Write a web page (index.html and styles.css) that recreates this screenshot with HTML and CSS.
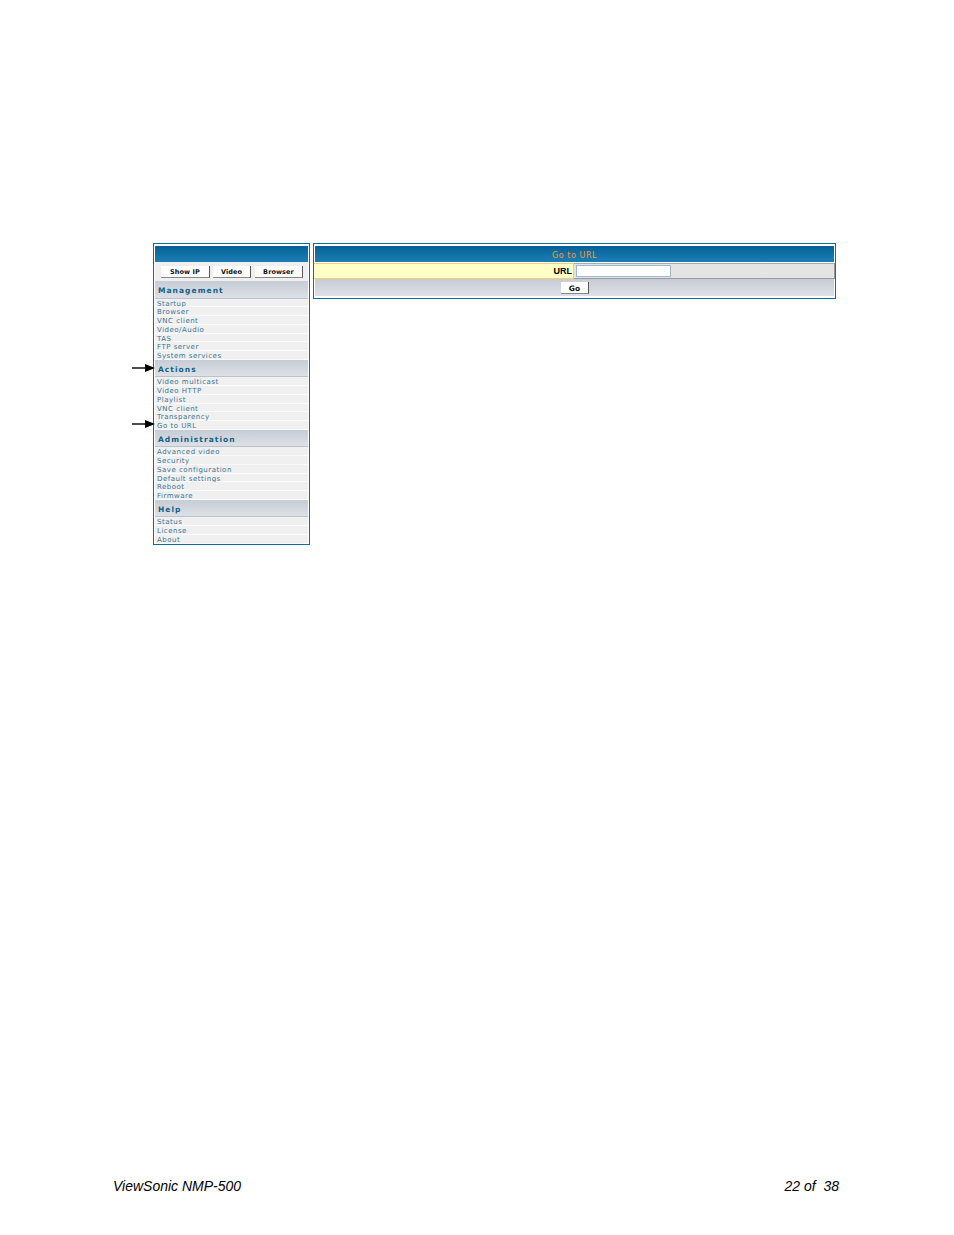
FILE: index.html
```html
<!DOCTYPE html>
<html lang="en">
<head>
    <meta charset="UTF-8">
    <title>ViewSonic NMP-500</title>
    <link rel="stylesheet" href="styles.css">
</head>
<body>
    <div class="page">
        <div class="shot">
            <div class="sidebar">
                <div class="bar"></div>
                <div class="buttons">
                    <span class="btn btn-ip">Show IP</span>
                    <span class="btn btn-video">Video</span>
                    <span class="btn btn-browser">Browser</span>
                </div>

                <div class="group-title">Management</div>
                <a class="item">Startup</a>
                <a class="item">Browser</a>
                <a class="item">VNC client</a>
                <a class="item">Video/Audio</a>
                <a class="item">TAS</a>
                <a class="item">FTP server</a>
                <a class="item">System services</a>

                <div class="group-title group-actions">Actions
                    <svg class="arrow" width="24" height="10" viewBox="0 0 24 10"><path d="M0 5H14" stroke="#000" stroke-width="1.4"/><path d="M13 1L23 5L13 9Z" fill="#000"/></svg>
                </div>
                <a class="item">Video multicast</a>
                <a class="item">Video HTTP</a>
                <a class="item">Playlist</a>
                <a class="item">VNC client</a>
                <a class="item">Transparency</a>
                <a class="item item-goto">Go to URL
                    <svg class="arrow" width="24" height="10" viewBox="0 0 24 10"><path d="M0 5H14" stroke="#000" stroke-width="1.4"/><path d="M13 1L23 5L13 9Z" fill="#000"/></svg>
                </a>

                <div class="group-title">Administration</div>
                <a class="item">Advanced video</a>
                <a class="item">Security</a>
                <a class="item">Save configuration</a>
                <a class="item">Default settings</a>
                <a class="item">Reboot</a>
                <a class="item">Firmware</a>

                <div class="group-title">Help</div>
                <a class="item">Status</a>
                <a class="item">License</a>
                <a class="item">About</a>
            </div>

            <div class="panel">
                <div class="panel-title">Go to URL</div>
                <div class="form-row">
                    <div class="form-label">URL</div>
                    <div class="form-field"><span class="text-input"></span></div>
                </div>
                <div class="panel-foot"><span class="btn btn-go">Go</span></div>
            </div>
        </div>

        <div class="footer">
            <span>ViewSonic NMP-500</span>
            <span>22 of&nbsp; 38</span>
        </div>
    </div>
</body>
</html>
```

FILE: styles.css
```css
html, body {
    margin: 0;
    background: #fff;
}
.page {
    box-sizing: border-box;
    height: 1235px;
    padding: 243px 115px 41px 113px;
    display: flex;
    flex-direction: column;
    justify-content: space-between;
}
.shot {
    display: flex;
    align-items: flex-start;
    gap: 3px;
    margin-left: 40px;
    margin-right: -3px;
}
.sidebar {
    position: relative;
    box-sizing: border-box;
    width: 157px;
    height: 302px;
    padding: 2px 1px 0;
    border: 1px solid #0b6ea3;
    background: #fff;
    font-family: "DejaVu Sans", sans-serif;
}
.bar {
    height: 16px;
    background: linear-gradient(#056198, #1b7fb4);
}
.buttons {
    display: flex;
    height: 19px;
    padding: 4px 0 0 6px;
    box-sizing: border-box;
    background: #efefef;
    gap: 3px;
}
.btn {
    box-sizing: border-box;
    display: flex;
    align-items: center;
    justify-content: center;
    height: 12px;
    padding-top: 1px;
    background: #fff;
    border-right: 1px solid #555;
    border-bottom: 1px solid #888;
    color: #111;
    font-family: "DejaVu Sans", sans-serif;
    font-size: 6.5px;
    font-weight: bold;
    letter-spacing: 0.1px;
}
.btn-ip { width: 49px; }
.btn-video { width: 38px; }
.btn-browser { width: 48px; margin-left: 1px; }
.group-title {
    position: relative;
    box-sizing: border-box;
    height: 17.5px;
    line-height: 20px;
    padding-left: 3px;
    background: linear-gradient(#c6ccd5, #dde1e6);
    border-bottom: 1px solid #b9c3cc;
    color: #145f86;
    font-size: 7.5px;
    font-weight: bold;
    letter-spacing: 1.05px;
}
.item {
    position: relative;
    display: block;
    box-sizing: border-box;
    height: 8.75px;
    line-height: 10px;
    padding-left: 2px;
    background: #f0f0f0;
    border-bottom: 1px solid #fafafa;
    color: #3a7596;
    font-size: 7px;
    letter-spacing: 0.5px;
    white-space: nowrap;
}
.arrow {
    position: absolute;
    left: -23px;
    top: 3px;
}
.item-goto .arrow {
    top: -2px;
}
.panel {
    box-sizing: border-box;
    width: 523px;
    height: 56px;
    padding: 2px 1px 0;
    border: 1px solid #0b6ea3;
    background: #fff;
}
.panel-title {
    height: 16px;
    line-height: 19px;
    margin-bottom: 1px;
    text-align: center;
    background: linear-gradient(#056198, #1b7fb4);
    color: #f5983a;
    font-family: "DejaVu Sans", sans-serif;
    font-size: 8px;
    letter-spacing: 0.55px;
}
.form-row {
    display: flex;
    box-sizing: border-box;
    height: 16px;
    margin: 0 -1px 0 -1px;
}
.form-label {
    box-sizing: border-box;
    width: 260px;
    padding-right: 1px;
    line-height: 14px;
    text-align: right;
    background: #ffffc6;
    border-bottom: 1px solid #f3cf73;
    border-right: 1px solid #f3cf73;
    border-top: 1px solid #f3cf73;
    color: #000;
    font-family: "Liberation Sans", sans-serif;
    font-size: 9px;
    font-weight: bold;
}
.form-field {
    flex: 1;
    box-sizing: border-box;
    padding: 1px 0 0 2px;
    background: #e4e4e4;
    border-top: 1px solid #aaa;
    border-bottom: 1px solid #999;
    border-right: 1px solid #999;
}
.text-input {
    display: block;
    box-sizing: border-box;
    width: 95px;
    height: 12px;
    background: #fff;
    border: 1px solid #9db7d0;
}
.panel-foot {
    height: 17px;
    padding-top: 3px;
    box-sizing: border-box;
    display: flex;
    justify-content: center;
    background: linear-gradient(#c6ccd5, #dde1e6);
}
.btn-go {
    width: 28px;
    font-size: 7.5px;
    padding-left: 1px;
}
.footer {
    display: flex;
    justify-content: space-between;
    color: #000;
    font-family: "Liberation Sans", sans-serif;
    font-size: 14px;
    font-style: italic;
    line-height: 16px;
}
```
